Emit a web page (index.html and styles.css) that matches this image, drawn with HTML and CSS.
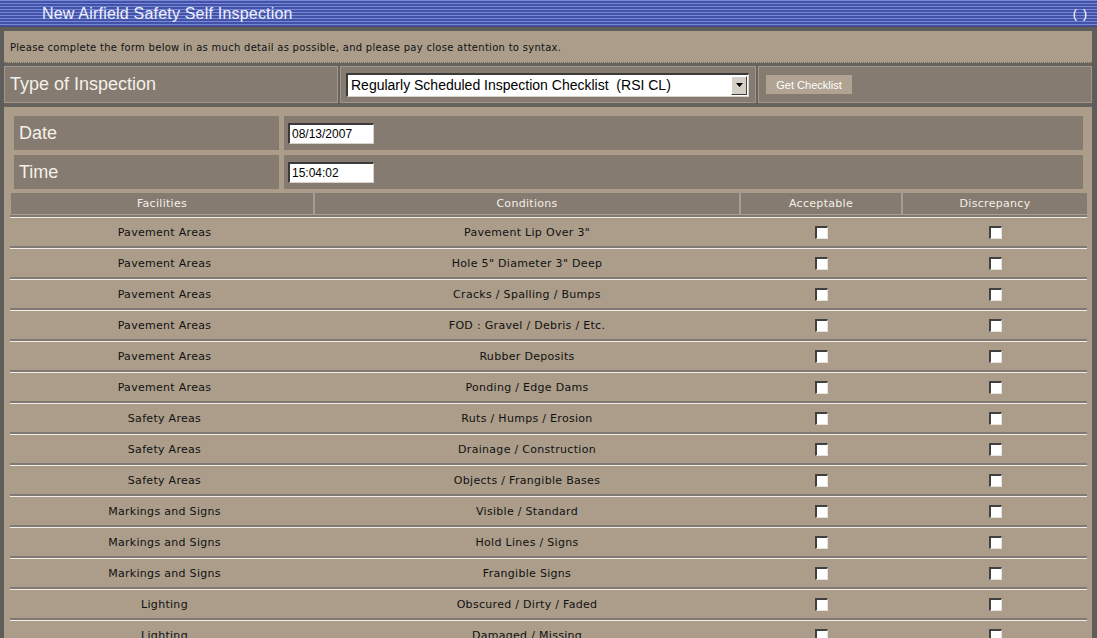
FILE: index.html
```html
<!DOCTYPE html>
<html>
<head>
<meta charset="utf-8">
<title>New Airfield Safety Self Inspection</title>
<link rel="stylesheet" href="styles.css">
</head>
<body>
<div class="titlebar">
  <span class="title">New Airfield Safety Self Inspection</span>
  <span class="title-ctrl">( )</span>
</div>
<div class="frame">
  <div class="notice">Please complete the form below in as much detail as possible, and please pay close attention to syntax.</div>
  <div class="typebar">
    <div class="tcell tlabel">Type of Inspection</div>
    <div class="tcell tselect">
      <div class="select">
        <span class="select-text">Regularly Scheduled Inspection Checklist&nbsp; (RSI CL)</span>
        <span class="select-arrow"><svg width="7" height="4" viewBox="0 0 7 4"><path d="M0 0H7L3.5 4Z" fill="#000"/></svg></span>
      </div>
    </div>
    <div class="tcell tbutton"><button class="btn">Get Checklist</button></div>
  </div>
  <div class="main">
    <div class="field">
      <div class="flabel">Date</div>
      <div class="finput"><input class="txt" type="text" value="08/13/2007"></div>
    </div>
    <div class="field">
      <div class="flabel">Time</div>
      <div class="finput"><input class="txt" type="text" value="15:04:02"></div>
    </div>
    <div class="grid head">
      <div class="hcell">Facilities</div>
      <div class="hcell">Conditions</div>
      <div class="hcell">Acceptable</div>
      <div class="hcell">Discrepancy</div>
    </div>
    <div class="grid row"><div>Pavement Areas</div><div>Pavement Lip Over 3"</div><div><input type="checkbox" class="cb"></div><div><input type="checkbox" class="cb"></div></div>
    <div class="grid row"><div>Pavement Areas</div><div>Hole 5" Diameter 3" Deep</div><div><input type="checkbox" class="cb"></div><div><input type="checkbox" class="cb"></div></div>
    <div class="grid row"><div>Pavement Areas</div><div>Cracks / Spalling / Bumps</div><div><input type="checkbox" class="cb"></div><div><input type="checkbox" class="cb"></div></div>
    <div class="grid row"><div>Pavement Areas</div><div>FOD : Gravel / Debris / Etc.</div><div><input type="checkbox" class="cb"></div><div><input type="checkbox" class="cb"></div></div>
    <div class="grid row"><div>Pavement Areas</div><div>Rubber Deposits</div><div><input type="checkbox" class="cb"></div><div><input type="checkbox" class="cb"></div></div>
    <div class="grid row"><div>Pavement Areas</div><div>Ponding / Edge Dams</div><div><input type="checkbox" class="cb"></div><div><input type="checkbox" class="cb"></div></div>
    <div class="grid row"><div>Safety Areas</div><div>Ruts / Humps / Erosion</div><div><input type="checkbox" class="cb"></div><div><input type="checkbox" class="cb"></div></div>
    <div class="grid row"><div>Safety Areas</div><div>Drainage / Construction</div><div><input type="checkbox" class="cb"></div><div><input type="checkbox" class="cb"></div></div>
    <div class="grid row"><div>Safety Areas</div><div>Objects / Frangible Bases</div><div><input type="checkbox" class="cb"></div><div><input type="checkbox" class="cb"></div></div>
    <div class="grid row"><div>Markings and Signs</div><div>Visible / Standard</div><div><input type="checkbox" class="cb"></div><div><input type="checkbox" class="cb"></div></div>
    <div class="grid row"><div>Markings and Signs</div><div>Hold Lines / Signs</div><div><input type="checkbox" class="cb"></div><div><input type="checkbox" class="cb"></div></div>
    <div class="grid row"><div>Markings and Signs</div><div>Frangible Signs</div><div><input type="checkbox" class="cb"></div><div><input type="checkbox" class="cb"></div></div>
    <div class="grid row"><div>Lighting</div><div>Obscured / Dirty / Faded</div><div><input type="checkbox" class="cb"></div><div><input type="checkbox" class="cb"></div></div>
    <div class="grid row"><div>Lighting</div><div>Damaged / Missing</div><div><input type="checkbox" class="cb"></div><div><input type="checkbox" class="cb"></div></div>
  </div>
</div>
</body>
</html>
```

FILE: styles.css
```css
html, body {
  margin: 0;
  padding: 0;
  height: 100%;
  overflow: hidden;
}
body {
  background: #5f5d5a;
  font-family: "DejaVu Sans", Verdana, sans-serif;
  font-size: 11px;
  color: #111;
}
.titlebar {
  height: 27px;
  display: flex;
  align-items: center;
  justify-content: space-between;
  padding: 0 9px 0 42px;
  background: repeating-linear-gradient(to bottom, #7888d4 0px, #7888d4 1px, #4252a8 1px, #4252a8 3px);
  border-bottom: 1px solid #4a4680;
  box-sizing: border-box;
}
.title {
  font-family: "Liberation Sans", Arial, sans-serif;
  font-size: 16px;
  color: #eef0ff;
  letter-spacing: 0.2px;
  padding-top: 1px;
}
.title-ctrl {
  font-family: "Liberation Sans", Arial, sans-serif;
  font-size: 13px;
  color: #fff;
  letter-spacing: 1px;
}
.frame {
  padding: 4px 5px 0 4px;
}
.notice {
  background: #ab9d8a;
  height: 32px;
  box-sizing: border-box;
  display: flex;
  align-items: center;
  padding: 1px 0 0 6px;
  font-size: 10px;
  letter-spacing: 0.28px;
  border-bottom: 1px dotted #6e6a62;
}
.typebar {
  display: flex;
  gap: 2px;
  padding: 3px 0 4px 0;
  background: #66625d;
}
.tcell {
  height: 37px;
  box-sizing: border-box;
  background: #857b70;
  border: 1px solid #a2978a;
  display: flex;
  align-items: center;
}
.tlabel {
  width: 334px;
  padding-left: 5px;
  font-family: "Liberation Sans", Arial, sans-serif;
  font-size: 18px;
  color: #f4f0e8;
}
.tselect {
  width: 416px;
  padding-left: 5px;
}
.tbutton {
  flex: 1;
  padding-left: 7px;
}
.select {
  width: 403px;
  height: 24px;
  box-sizing: border-box;
  background: #fff;
  border-top: 2px solid #3a3a3a;
  border-left: 2px solid #3a3a3a;
  border-right: 1px solid #d8d4cc;
  border-bottom: 1px solid #d8d4cc;
  display: flex;
  align-items: center;
  justify-content: space-between;
}
.select-text {
  font-family: "Liberation Sans", Arial, sans-serif;
  font-size: 14px;
  color: #000;
  padding-left: 3px;
}
.select-arrow {
  width: 16px;
  height: 19px;
  margin-right: 1px;
  background: #d4d0c8;
  border-top: 1px solid #fff;
  border-left: 1px solid #fff;
  border-right: 1px solid #404040;
  border-bottom: 1px solid #404040;
  box-sizing: border-box;
  display: flex;
  align-items: center;
  justify-content: center;
}
.btn {
  width: 86px;
  height: 19px;
  border: none;
  background: #b0a392;
  color: #fff;
  font-family: "Liberation Sans", Arial, sans-serif;
  font-size: 11px;
  padding: 0;
}
.main {
  background: #ab9d8a;
  padding: 9px 5px 0 6px;
  min-height: 600px;
}
.field {
  display: flex;
  gap: 5px;
  margin: 0 4px 5px 4px;
  height: 34px;
}
.flabel {
  width: 265px;
  background: #857b70;
  color: #f4f0e8;
  font-family: "Liberation Sans", Arial, sans-serif;
  font-size: 18px;
  display: flex;
  align-items: center;
  padding-left: 5px;
  box-sizing: border-box;
}
.finput {
  flex: 1;
  background: #857b70;
  display: flex;
  align-items: center;
  padding-left: 4px;
}
.txt {
  width: 86px;
  height: 21px;
  box-sizing: border-box;
  margin: 0;
  padding: 0 0 0 2px;
  border-top: 2px solid #3a3a3a;
  border-left: 2px solid #3a3a3a;
  border-right: 1px solid #d8d4cc;
  border-bottom: 1px solid #d8d4cc;
  background: #fff;
  font-family: "Liberation Sans", Arial, sans-serif;
  font-size: 12px;
  color: #000;
  outline: none;
}
.grid {
  display: grid;
  grid-template-columns: 303px 424px 160px 184px;
  column-gap: 2px;
}
.head {
  grid-template-columns: 302px 424px 160px 184px;
  height: 21px;
  margin: -1px 0 1px 1px;
}
.hcell {
  background: #857b70;
  color: #f4f0e8;
  display: flex;
  align-items: center;
  justify-content: center;
  font-size: 11px;
  letter-spacing: 0.3px;
}
.row {
  height: 31px;
  box-sizing: border-box;
  border-top: 2px solid #7f7b74;
  box-shadow: inset 0 1px 0 #f2eee6;
  padding-top: 1px;
}
.row > div {
  display: flex;
  align-items: center;
  justify-content: center;
  letter-spacing: 0.3px;
}
.row > div:first-child {
  padding-left: 6px;
}
.cb {
  appearance: none;
  -webkit-appearance: none;
  width: 13px;
  height: 13px;
  margin: 0;
  box-sizing: border-box;
  background: #fff;
  border-top: 2px solid #404040;
  border-left: 2px solid #404040;
  border-right: 1px solid #e6e2da;
  border-bottom: 1px solid #e6e2da;
}
```
